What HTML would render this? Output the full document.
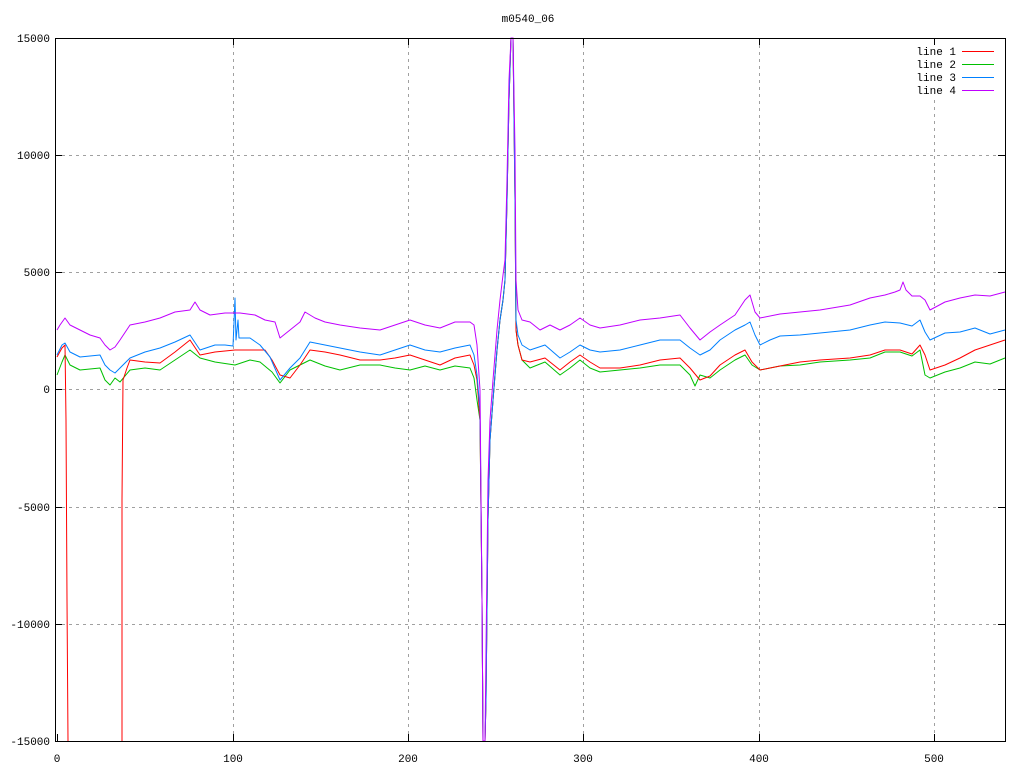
<!DOCTYPE html>
<html><head><style>
html,body{margin:0;padding:0;background:#fff;}
svg{display:block;}
text{font-family:"Liberation Mono","DejaVu Sans Mono",monospace;font-size:11px;fill:#000;}
</style></head><body>
<svg width="1024" height="768" viewBox="0 0 1024 768" xmlns="http://www.w3.org/2000/svg">
<rect width="1024" height="768" fill="#fff"/>
<g stroke="#a0a0a0" stroke-width="1" stroke-dasharray="3,4" fill="none" shape-rendering="crispEdges">
<line x1="233.5" y1="38" x2="233.5" y2="741"/>
<line x1="408.5" y1="38" x2="408.5" y2="741"/>
<line x1="583.5" y1="38" x2="583.5" y2="741"/>
<line x1="759.5" y1="38" x2="759.5" y2="741"/>
<line x1="934.5" y1="100" x2="934.5" y2="741"/>
<line x1="55" y1="155.5" x2="1005" y2="155.5"/>
<line x1="55" y1="272.5" x2="1005" y2="272.5"/>
<line x1="55" y1="389.5" x2="1005" y2="389.5"/>
<line x1="55" y1="507.5" x2="1005" y2="507.5"/>
<line x1="55" y1="624.5" x2="1005" y2="624.5"/>
</g>
<g fill="none" stroke-width="1" stroke-linejoin="round">
<polyline stroke="#00c000" points="57,375 62,362 65,355 70,365 80,370 100,368 105,380 110,385 115,378 120,382 130,370 145,368 160,370 175,360 190,350 200,358 215,362 235,365 250,360 260,362 272,372 280,383 290,370 300,365 310,360 325,366 340,370 360,365 380,365 395,368 410,370 425,366 440,370 455,366 470,368 474,378 477,400 480,420 482,600 483,741 485,741 486,700 488,520 490,440 493,400 497,350 500,320 503,300 505,280 507,200 509,100 511,38 513,38 515,200 516,330 518,345 522,360 530,368 545,362 560,375 570,368 580,360 590,368 600,372 620,370 640,368 660,365 680,365 690,375 695,386 700,375 710,378 720,370 735,360 745,355 752,365 760,370 780,366 800,365 820,362 850,360 870,358 885,352 900,352 912,356 920,350 925,375 930,378 945,372 960,368 975,362 990,364 1005,358"/>
<polyline stroke="#ff0000" points="57,357 62,348 65,345 66,420 67,600 68,741 M0,0"/>
<polyline stroke="#ff0000" points="122,741 122,500 123,380 127,368 130,360 145,362 160,363 175,352 190,340 200,355 215,352 235,350 250,350 265,350 272,360 280,375 290,378 300,365 310,350 325,352 340,355 360,360 380,360 395,358 410,355 425,360 440,365 455,358 470,355 474,365 477,380 480,420 482,600 483,741 485,741 486,700 488,520 490,440 493,400 497,350 500,320 503,300 505,280 507,200 509,100 511,38 513,38 515,200 516,330 518,345 522,360 530,362 545,358 560,370 570,362 580,355 590,362 600,368 620,368 640,365 660,360 680,358 690,368 700,380 710,376 720,365 735,355 745,350 752,362 760,370 780,366 800,362 820,360 850,358 870,355 885,350 900,350 912,354 920,345 925,355 930,370 945,365 960,358 975,350 990,345 1005,340"/>
<polyline stroke="#0080ff" points="57,355 62,345 65,343 70,352 80,357 100,355 105,365 110,370 115,373 120,368 130,358 145,352 160,348 175,342 190,335 200,350 215,345 225,345 233,346 235,298 236,340 238,320 239,338 250,338 260,345 270,357 280,380 290,368 300,358 310,342 325,345 340,348 360,352 380,355 395,350 410,345 425,350 440,352 455,348 470,345 474,355 477,375 480,410 482,600 483,741 485,741 486,700 488,520 490,440 493,400 497,350 500,320 503,300 505,280 507,200 509,100 511,38 513,38 515,200 516,320 518,335 522,345 530,350 545,345 560,358 570,352 580,345 590,350 600,352 620,350 640,345 660,340 680,340 690,348 700,355 710,350 720,340 735,330 745,325 750,322 755,335 760,345 770,340 780,336 800,335 820,333 850,330 870,325 885,322 900,323 912,326 920,320 925,332 930,340 945,333 960,332 975,328 990,334 1005,330"/>
<polyline stroke="#c000ff" points="57,330 60,325 65,318 70,325 80,330 90,335 100,338 105,345 110,350 115,347 120,340 130,325 145,322 160,318 175,312 190,310 195,302 200,310 210,315 225,313 240,313 255,315 265,320 275,322 280,338 290,330 300,322 305,312 315,318 325,322 340,325 360,328 380,330 395,325 410,320 425,325 440,328 455,322 470,322 474,325 477,345 480,390 482,600 483,741 485,741 486,650 488,480 490,420 493,380 497,330 500,300 503,275 505,260 507,180 509,80 511,38 513,38 515,150 516,280 518,310 522,320 530,322 540,330 550,325 560,330 570,325 580,318 590,325 600,328 620,325 640,320 660,318 680,315 690,328 700,340 710,332 720,325 735,315 745,300 750,295 755,312 760,318 780,314 800,312 820,310 850,305 870,298 885,295 895,292 900,290 903,282 906,290 912,296 920,296 925,300 930,310 945,302 960,298 975,295 990,296 1005,292"/>
</g>
<rect x="55.5" y="38.5" width="950" height="703" fill="none" stroke="#000" stroke-width="1" shape-rendering="crispEdges"/>
<g stroke="#000" stroke-width="1" shape-rendering="crispEdges">
<line x1="55" y1="38.5" x2="62" y2="38.5"/><line x1="55" y1="155.5" x2="62" y2="155.5"/><line x1="55" y1="272.5" x2="62" y2="272.5"/><line x1="55" y1="389.5" x2="62" y2="389.5"/><line x1="55" y1="507.5" x2="62" y2="507.5"/><line x1="55" y1="624.5" x2="62" y2="624.5"/><line x1="55" y1="741.5" x2="62" y2="741.5"/>
<line x1="998" y1="38.5" x2="1005" y2="38.5"/><line x1="998" y1="155.5" x2="1005" y2="155.5"/><line x1="998" y1="272.5" x2="1005" y2="272.5"/><line x1="998" y1="389.5" x2="1005" y2="389.5"/><line x1="998" y1="507.5" x2="1005" y2="507.5"/><line x1="998" y1="624.5" x2="1005" y2="624.5"/>
<line x1="57.5" y1="741" x2="57.5" y2="734"/><line x1="233.5" y1="741" x2="233.5" y2="734"/><line x1="408.5" y1="741" x2="408.5" y2="734"/><line x1="583.5" y1="741" x2="583.5" y2="734"/><line x1="759.5" y1="741" x2="759.5" y2="734"/><line x1="934.5" y1="741" x2="934.5" y2="734"/>
<line x1="233.5" y1="38" x2="233.5" y2="45"/><line x1="408.5" y1="38" x2="408.5" y2="45"/><line x1="583.5" y1="38" x2="583.5" y2="45"/><line x1="759.5" y1="38" x2="759.5" y2="45"/><line x1="934.5" y1="38" x2="934.5" y2="45"/>
</g>
<g text-anchor="end">
<text x="50" y="42">15000</text><text x="50" y="159">10000</text><text x="50" y="276">5000</text><text x="50" y="393">0</text><text x="50" y="511">-5000</text><text x="50" y="628">-10000</text><text x="50" y="745">-15000</text>
</g>
<g text-anchor="middle">
<text x="57" y="762">0</text><text x="233" y="762">100</text><text x="408" y="762">200</text><text x="583" y="762">300</text><text x="759" y="762">400</text><text x="934" y="762">500</text>
<text x="528" y="22">m0540_06</text>
</g>
<g text-anchor="end">
<text x="956" y="55">line 1</text><text x="956" y="68">line 2</text><text x="956" y="81">line 3</text><text x="956" y="94">line 4</text>
</g>
<g stroke-width="1" shape-rendering="crispEdges">
<line x1="962" y1="51.5" x2="994" y2="51.5" stroke="#ff0000"/>
<line x1="962" y1="64.5" x2="994" y2="64.5" stroke="#00c000"/>
<line x1="962" y1="77.5" x2="994" y2="77.5" stroke="#0080ff"/>
<line x1="962" y1="90.5" x2="994" y2="90.5" stroke="#c000ff"/>
</g>
</svg>
</body></html>
